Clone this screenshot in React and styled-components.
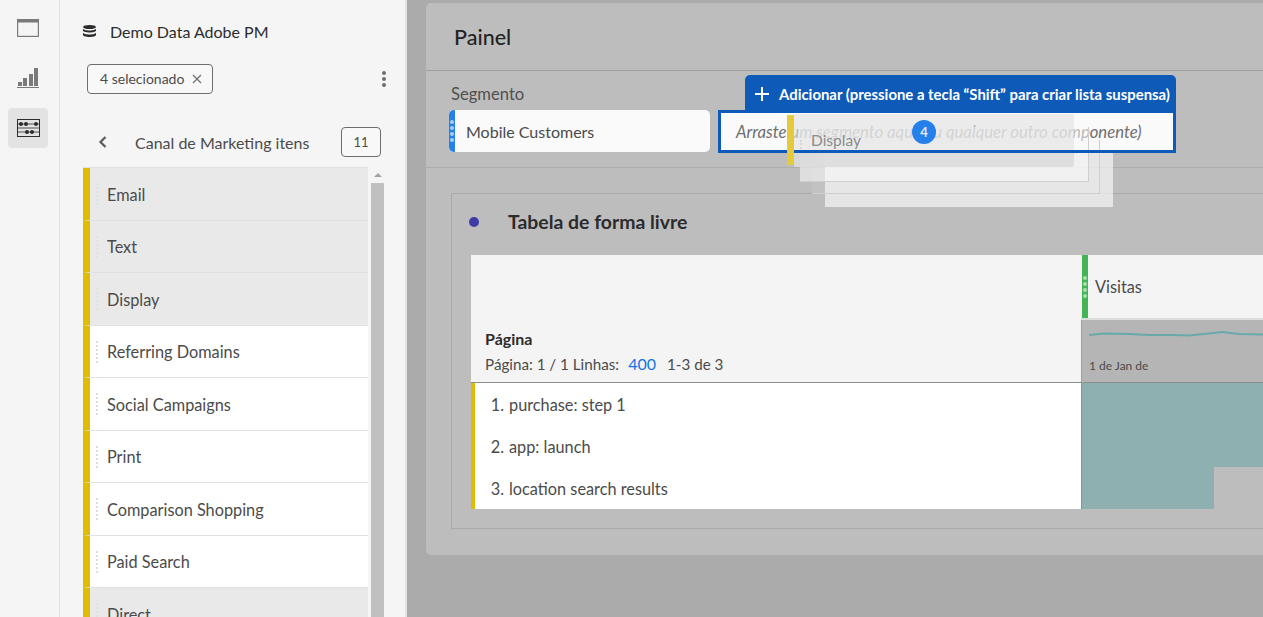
import React from 'react';
import styled, { createGlobalStyle } from 'styled-components';

const GlobalStyle = createGlobalStyle`
  html, body {
    margin: 0;
    padding: 0;
    height: 100%;
    overflow: hidden;
  }
  body {
    font-family: "Lato", "Noto Sans", sans-serif;
    color: #4b4b4b;
  }
  * {
    box-sizing: border-box;
  }
`;

const Page = styled.div`
  display: flex;
  width: 1263px;
  height: 617px;
  overflow: hidden;
  position: relative;
  background: #f5f5f5;
`;

const Rail = styled.nav`
  width: 60px;
  flex-shrink: 0;
  border-right: 1px solid #e1e1e1;
  display: flex;
  flex-direction: column;
  align-items: center;
  padding: 8px 3px 0 0;
`;

const RailButton = styled.div`
  width: 40px;
  height: 40px;
  margin-bottom: ${(props) => props.gap || 0}px;
  border-radius: 4px;
  background: ${(props) => (props.active ? '#e3e3e3' : 'transparent')};
  display: flex;
  align-items: center;
  justify-content: center;
`;

const Side = styled.aside`
  width: 347px;
  flex-shrink: 0;
  padding: 0 0 0 23px;
  border-right: 2px solid #e4e4e4;
  display: flex;
  flex-direction: column;
`;

const SideTitle = styled.div`
  display: flex;
  align-items: center;
  height: 62px;
  gap: 14px;
  font-size: 16px;
  color: #2c2c2c;
`;

const ChipRow = styled.div`
  display: flex;
  align-items: center;
  justify-content: space-between;
  padding: 1px 19px 0 4px;
  height: 32px;
`;

const Chip = styled.div`
  display: flex;
  align-items: center;
  justify-content: space-between;
  width: 126px;
  height: 30px;
  padding: 0 10px 0 12px;
  border: 1px solid #6e6e6e;
  border-radius: 4px;
  background: #f8f8f8;
  font-size: 14px;
  color: #4b4b4b;
`;

const ListHead = styled.div`
  display: flex;
  align-items: center;
  height: 30px;
  margin-top: 33px;
  padding-left: 15px;
  font-size: 16px;
`;

const ListTitle = styled.div`
  flex: 1;
  padding-left: 27px;
`;

const CountBox = styled.div`
  width: 40px;
  height: 30px;
  margin-right: 24px;
  border: 1px solid #6e6e6e;
  border-radius: 4px;
  background: #f8f8f8;
  font-size: 13px;
  display: flex;
  align-items: center;
  justify-content: center;
`;

const ListWrap = styled.div`
  display: flex;
  margin-top: 10px;
  flex: 1;
  min-height: 0;
`;

const List = styled.div`
  width: 285px;
  flex-shrink: 0;
  border-top: 1px solid #e1e1e1;
`;

const Row = styled.div`
  height: 52.5px;
  padding-top: 1px;
  display: flex;
  align-items: center;
  border-left: 7px solid #e0bc00;
  border-bottom: 1px solid #e1e1e1;
  background: ${(props) => (props.selected ? '#e9e9e9' : '#ffffff')};
  font-size: 16.3px;
  color: #4b4b4b;
`;

const RowHandle = styled.span`
  width: 2px;
  height: 22px;
  margin: 0 9px 0 6px;
  border-left: 2px dotted ${(props) => (props.selected ? '#e2e2e2' : '#dedede')};
`;

const ScrollTrack = styled.div`
  width: 19px;
  padding: 0 3px;
  display: flex;
  flex-direction: column;
  align-items: center;
`;

const ScrollUp = styled.div`
  height: 16px;
  width: 100%;
  display: flex;
  align-items: center;
  justify-content: center;
  &::before {
    content: '';
    border-left: 4px solid transparent;
    border-right: 4px solid transparent;
    border-bottom: 4px solid #a3a3a3;
  }
`;

const ScrollThumb = styled.div`
  width: 13px;
  flex: 1;
  background: #c0c0c0;
`;

const Main = styled.main`
  flex: 1;
  min-width: 0;
  background: #ababab;
  padding: 3px 0 0 19px;
  overflow: hidden;
`;

const Card = styled.section`
  width: 1000px;
  height: 552px;
  background: #bdbdbd;
  border-radius: 5px 0 0 5px;
`;

const CardHead = styled.header`
  height: 68px;
  padding-left: 28px;
  display: flex;
  align-items: center;
  font-size: 21.5px;
  font-weight: 500;
  color: #232323;
  border-bottom: 1px solid #a0a0a0;
`;

const SegmentBar = styled.div`
  height: 97px;
  padding: 12px 0 0 23px;
  border-bottom: 1px solid #adadad;
`;

const SegmentLabel = styled.div`
  height: 27px;
  padding-left: 2px;
  font-size: 16.6px;
  line-height: 22px;
  color: #505050;
`;

const Fields = styled.div`
  display: flex;
  gap: 8px;
`;

const SegmentField = styled.div`
  width: 261px;
  height: 42px;
  background: #fafafa;
  border-radius: 5px;
  overflow: hidden;
  display: flex;
  align-items: center;
  font-size: 16px;
  color: #4b4b4b;
`;

const BlueGrip = styled.span`
  width: 6px;
  height: 100%;
  margin-right: 11px;
  background: #2680eb;
  display: flex;
  flex-direction: column;
  align-items: center;
  justify-content: center;
  gap: 2px;
`;

const Dot = styled.i`
  width: 4px;
  height: 4px;
  border-radius: 50%;
  background: ${(props) => props.color};
`;

const DropField = styled.div`
  position: relative;
  width: 458px;
  height: 43px;
  border: 3px solid #0d5ab8;
  border-bottom-color: transparent;
  background: #fafafa;
  padding-left: 15px;
  display: flex;
  align-items: center;
  font-size: 16.7px;
  font-style: italic;
  color: #6e6e6e;
  white-space: nowrap;

  /* the bottom edge stays above the dragged cards */
  &::after {
    content: '';
    position: absolute;
    left: -3px;
    right: -3px;
    bottom: -3px;
    height: 3px;
    background: #0d5ab8;
    z-index: 5;
  }
`;

const DropTab = styled.div`
  position: absolute;
  left: 24px;
  right: -3px;
  top: -38px;
  height: 38px;
  background: #0d5ab8;
  border-radius: 5px 5px 0 0;
  display: flex;
  align-items: center;
  padding-left: 9px;
  gap: 9px;
  font-size: 14.9px;
  font-style: normal;
  font-weight: 700;
  color: #ffffff;
`;

const Ghost = styled.div`
  position: absolute;
  left: ${(props) => props.x}px;
  top: ${(props) => props.y}px;
  width: ${(props) => props.w}px;
  height: ${(props) => props.h}px;
  background: rgba(250, 250, 250, ${(props) => props.alpha});
  border-right: 1px solid ${(props) => props.line};
  border-bottom: 1px solid ${(props) => props.line};
  z-index: ${(props) => props.z};
`;

const GhostTop = styled.div`
  position: absolute;
  left: 794px;
  top: 114px;
  width: 280px;
  height: 53px;
  background: linear-gradient(rgba(226, 226, 226, 0.62) 39px, rgba(220, 220, 220, 0.9) 39px);
  border-radius: 0 0 3px 0;
  padding: 17px 0 0 17px;
  font-size: 15.5px;
  color: #8b8b8b;
  z-index: 4;

  &::before {
    content: '';
    position: absolute;
    left: 6px;
    top: 26px;
    height: 12px;
    border-left: 2px dotted #d8d8d8;
  }
`;

const GhostBar = styled.div`
  position: absolute;
  left: 787px;
  top: 115px;
  width: 7px;
  height: 50px;
  background: #e5cb3c;
  z-index: 6;
`;

const GhostBadge = styled.div`
  position: absolute;
  left: 912px;
  top: 120px;
  width: 24px;
  height: 24px;
  border-radius: 50%;
  background: #2680eb;
  color: #e8e8e8;
  font-size: 13px;
  font-weight: 700;
  z-index: 6;
  display: flex;
  align-items: center;
  justify-content: center;
`;

const Content = styled.div`
  padding: 25px 0 0 25px;
`;

const TableBox = styled.div`
  width: 900px;
  height: 336px;
  border: 1px solid #a9a9a9;
`;

const BoxTitle = styled.div`
  height: 61px;
  display: flex;
  align-items: center;
  padding: 0 0 6px 17px;
  gap: 29px;
  font-size: 19.4px;
  font-weight: 700;
  color: #2c2c2c;
`;

const TitleDot = styled.span`
  width: 10px;
  height: 10px;
  border-radius: 50%;
  background: #3d3da5;
`;

const Grid = styled.div`
  margin-left: 19px;
  display: grid;
  grid-template-columns: 610px 1fr;
  grid-template-rows: 65px 63px 42px 42px 42px;
`;

const HeadBlank = styled.div`
  background: #f4f4f4;
`;

const MetricHead = styled.div`
  background: #f4f4f4;
  border-bottom: 2px solid #dcdcdc;
  display: flex;
  align-items: stretch;
  font-size: 16.3px;
  color: #4b4b4b;
`;

const MetricGrip = styled.span`
  width: 6px;
  margin: 0 7px 0 1px;
  background: #44b556;
  display: flex;
  flex-direction: column;
  align-items: center;
  justify-content: center;
  gap: 2px;
`;

const MetricName = styled.span`
  align-self: center;
`;

const DimHead = styled.div`
  background: #f4f4f4;
  border-bottom: 1px solid #8e8e8e;
  padding: 8px 0 0 14px;
`;

const DimName = styled.div`
  font-size: 16px;
  font-weight: 700;
  color: #2c2c2c;
  line-height: 22px;
`;

const Pager = styled.div`
  display: flex;
  gap: 9px;
  margin-top: 1px;
  font-size: 15.2px;
  line-height: 26px;
`;

const PagerLink = styled.span`
  color: #1473e6;
  font-size: 16px;
  margin-right: 2px;
`;

const SparkCell = styled.div`
  background: #b5b5b5;
  border-bottom: 1px solid #8e8e8e;
  border-left: 1px solid #a0a0a0;
  padding-left: 7px;
  font-size: 12px;
  color: #4b4b4b;
`;

const SparkLabel = styled.div`
  margin-top: 18px;
`;

const NameCell = styled.div`
  background: #ffffff;
  border-left: 4px solid #e0bc00;
  display: flex;
  align-items: center;
  font-size: 16.3px;
`;

const Rank = styled.span`
  width: 29px;
  margin-right: 5px;
  text-align: right;
`;

const ValueCell = styled.div`
  border-left: 1px solid #8e8e8e;
  background: linear-gradient(to right, #8fb0b0 ${(props) => props.fill}, #bdbdbd ${(props) => props.fill});
`;

const sideItems = [
  { name: 'Email', selected: true },
  { name: 'Text', selected: true },
  { name: 'Display', selected: true },
  { name: 'Referring Domains' },
  { name: 'Social Campaigns' },
  { name: 'Print' },
  { name: 'Comparison Shopping' },
  { name: 'Paid Search' },
  { name: 'Direct', selected: true },
];

const ghosts = [
  { x: 825, y: 153, w: 288, h: 54, z: 1, alpha: 0.65, line: 'transparent' },
  { x: 812, y: 140, w: 288, h: 54, z: 2, alpha: 0.1, line: '#cfcfcf' },
  { x: 800, y: 127, w: 289, h: 55, z: 3, alpha: 0.55, line: '#cfcfcf' },
];

const tableRows = [
  { rank: '1.', name: 'purchase: step 1', fill: '100%' },
  { rank: '2.', name: 'app: launch', fill: '100%' },
  { rank: '3.', name: 'location search results', fill: '132px' },
];

const sparkPoints = '0,15 15,13.500 40,14 60,15 85,15 99,15.500 115,14 133,12 150,14 174,14.500';

const Dots = ({ color }) => (
  <>
    <Dot color={color} />
    <Dot color={color} />
    <Dot color={color} />
    <Dot color={color} />
  </>
);

const App = () => {
  return (
    <Page>
      <GlobalStyle />
      <Rail>
        <RailButton gap={10}>
          <svg width="22" height="18" viewBox="0 0 22 18">
            <rect x="0.600" y="1" width="20.800" height="16.400" fill="none" stroke="#7a7a7a" strokeWidth="1.200" />
            <rect x="0" y="0" width="22" height="3.500" fill="#7a7a7a" />
          </svg>
        </RailButton>
        <RailButton gap={10}>
          <svg width="22" height="20" viewBox="0 0 22 20">
            <g fill="#7a7a7a">
              <rect x="1" y="14" width="4" height="4" />
              <rect x="6" y="10" width="4" height="8" />
              <rect x="12" y="6" width="4" height="12" />
              <rect x="17" y="0" width="4" height="18" />
              <rect x="0" y="19" width="22" height="1" />
            </g>
          </svg>
        </RailButton>
        <RailButton active>
          <svg width="23" height="18" viewBox="0 0 23 18">
            <rect x="0.500" y="0.500" width="22" height="17" fill="none" stroke="#2c2c2c" />
            <path d="M0 5h23M0 9h23M0 13h23" stroke="#2c2c2c" strokeWidth="0.800" fill="none" />
            <g fill="#2c2c2c">
              <circle cx="4" cy="5" r="2" />
              <circle cx="9" cy="5" r="2" />
              <circle cx="19" cy="5" r="2" />
              <circle cx="10" cy="13" r="2" />
              <circle cx="15" cy="13" r="2" />
            </g>
          </svg>
        </RailButton>
      </Rail>

      <Side>
        <SideTitle>
          <svg width="13" height="12" viewBox="0 0 13 12">
            <g fill="#2c2c2c">
              <ellipse cx="6.500" cy="2" rx="6.500" ry="2" />
              <path d="M0 3.500v2c0 1.100 2.900 2 6.500 2s6.500-.9 6.500-2v-2c0 1.100-2.900 2-6.500 2S0 4.600 0 3.500z" />
              <path d="M0 7.500V10c0 1.100 2.900 2 6.500 2s6.500-.9 6.500-2V7.500c0 1.100-2.900 2-6.500 2S0 8.600 0 7.500z" />
            </g>
          </svg>
          Demo Data Adobe PM
        </SideTitle>
        <ChipRow>
          <Chip>
            4 selecionado
            <svg width="10" height="10" viewBox="0 0 10 10">
              <path d="M1 1l8 8M9 1l-8 8" stroke="#6e6e6e" strokeWidth="1.200" />
            </svg>
          </Chip>
          <svg width="4" height="16" viewBox="0 0 4 16">
            <g fill="#6e6e6e">
              <circle cx="2" cy="2" r="2" />
              <circle cx="2" cy="8" r="2" />
              <circle cx="2" cy="14" r="2" />
            </g>
          </svg>
        </ChipRow>
        <ListHead>
          <svg width="10" height="12" viewBox="0 0 10 12">
            <path d="M7.500 1L2.500 6l5 5" fill="none" stroke="#5a5a5a" strokeWidth="2.200" />
          </svg>
          <ListTitle>Canal de Marketing itens</ListTitle>
          <CountBox>11</CountBox>
        </ListHead>
        <ListWrap>
          <List>
            {sideItems.map((item) => (
              <Row key={item.name} selected={item.selected}>
                <RowHandle selected={item.selected} />
                {item.name}
              </Row>
            ))}
          </List>
          <ScrollTrack>
            <ScrollUp />
            <ScrollThumb />
          </ScrollTrack>
        </ListWrap>
      </Side>

      <Main>
        <Card>
          <CardHead>Painel</CardHead>
          <SegmentBar>
            <SegmentLabel>Segmento</SegmentLabel>
            <Fields>
              <SegmentField>
                <BlueGrip>
                  <Dots color="#a9cdf7" />
                </BlueGrip>
                Mobile Customers
              </SegmentField>
              <DropField>
                <DropTab>
                  <svg width="16" height="16" viewBox="0 0 16 16">
                    <path d="M8 1v14M1 8h14" stroke="#ffffff" strokeWidth="2" />
                  </svg>
                  Adicionar (pressione a tecla “Shift” para criar lista suspensa)
                </DropTab>
                Arraste um segmento aqui (ou qualquer outro componente)
              </DropField>
            </Fields>
          </SegmentBar>
          <Content>
            <TableBox>
              <BoxTitle>
                <TitleDot />
                Tabela de forma livre
              </BoxTitle>
              <Grid>
                <HeadBlank />
                <MetricHead>
                  <MetricGrip>
                    <Dots color="#a8e0b0" />
                  </MetricGrip>
                  <MetricName>Visitas</MetricName>
                </MetricHead>
                <DimHead>
                  <DimName>Página</DimName>
                  <Pager>
                    <span>Página: 1 / 1 Linhas:</span>
                    <PagerLink>400</PagerLink>
                    <span>1-3 de 3</span>
                  </Pager>
                </DimHead>
                <SparkCell>
                  <svg width="174" height="20" viewBox="0 0 174 20" display="block">
                    <polyline points={sparkPoints} fill="none" stroke="#68a9ab" strokeWidth="2" />
                  </svg>
                  <SparkLabel>1 de Jan de</SparkLabel>
                </SparkCell>
                {tableRows.map((row) => (
                  <React.Fragment key={row.rank}>
                    <NameCell>
                      <Rank>{row.rank}</Rank>
                      {row.name}
                    </NameCell>
                    <ValueCell fill={row.fill} />
                  </React.Fragment>
                ))}
              </Grid>
            </TableBox>
          </Content>
        </Card>
      </Main>

      {ghosts.map((g) => (
        <Ghost key={g.x} x={g.x} y={g.y} w={g.w} h={g.h} z={g.z} alpha={g.alpha} line={g.line} />
      ))}
      <GhostTop>Display</GhostTop>
      <GhostBar />
      <GhostBadge>4</GhostBadge>
    </Page>
  );
};

export default App;
